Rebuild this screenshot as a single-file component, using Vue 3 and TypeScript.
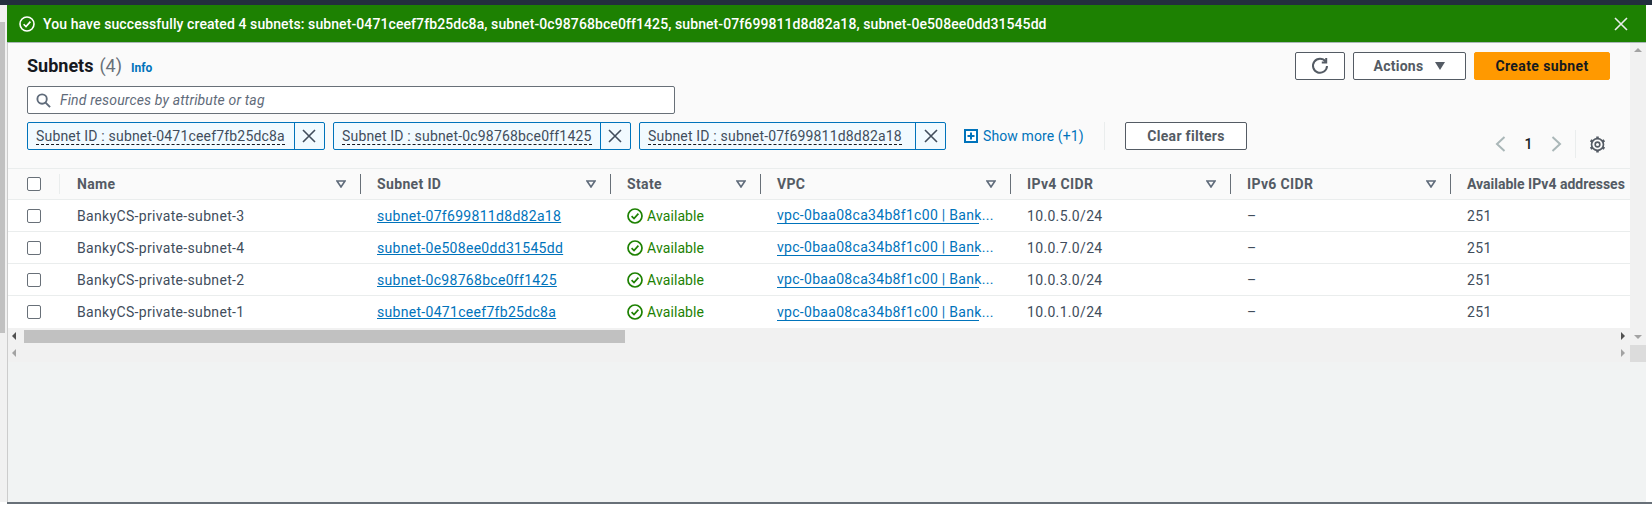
<script setup lang="ts">
interface Row { name: string; id: string; cidr: string }
const rows: Row[] = [
  { name: 'BankyCS-private-subnet-3', id: 'subnet-07f699811d8d82a18', cidr: '10.0.5.0/24' },
  { name: 'BankyCS-private-subnet-4', id: 'subnet-0e508ee0dd31545dd', cidr: '10.0.7.0/24' },
  { name: 'BankyCS-private-subnet-2', id: 'subnet-0c98768bce0ff1425', cidr: '10.0.3.0/24' },
  { name: 'BankyCS-private-subnet-1', id: 'subnet-0471ceef7fb25dc8a', cidr: '10.0.1.0/24' },
]
const tokens = ['subnet-0471ceef7fb25dc8a', 'subnet-0c98768bce0ff1425', 'subnet-07f699811d8d82a18']
const cols = ['Name', 'Subnet ID', 'State', 'VPC', 'IPv4 CIDR', 'IPv6 CIDR']
</script>

<template>
  <div class="page">
    <div class="topbar"></div>
    <div class="main">
      <div class="leftbar"><div class="leftthumb"></div></div>
      <div class="content">
        <div class="flash">
          <svg class="flash-ico" width="16" height="16" viewBox="0 0 16 16" fill="none" stroke="#fff" stroke-width="1.6"><circle cx="8" cy="8" r="7"/><path d="M4.6 8.2 7 10.6l4.4-5"/></svg>
          <span class="flash-text">You have successfully created 4 subnets: subnet-0471ceef7fb25dc8a, subnet-0c98768bce0ff1425, subnet-07f699811d8d82a18, subnet-0e508ee0dd31545dd</span>
          <svg class="flash-x" width="14" height="14" viewBox="0 0 14 14" fill="none" stroke="#eaeded" stroke-width="1.6"><path d="M1 1l12 12M13 1 1 13"/></svg>
        </div>
        <div class="work">
          <div class="body">
            <div class="head">
              <div class="filters">
                <div class="title"><b>Subnets</b><span class="count">(4)</span><a class="info">Info</a></div>
                <div class="search">
                  <svg width="15" height="15" viewBox="0 0 16 16" fill="none" stroke="#5f6b7a" stroke-width="2"><circle cx="6.5" cy="6.5" r="5"/><path d="M10.2 10.2 15 15"/></svg>
                  <span>Find resources by attribute or tag</span>
                </div>
                <div class="tokens">
                  <div v-for="t in tokens" :key="t" class="token">
                    <span class="token-text"><span>Subnet ID : {{ t }}</span></span>
                    <span class="token-x"><svg width="14" height="14" viewBox="0 0 14 14" fill="none" stroke="#414d5c" stroke-width="1.6"><path d="M1 1l12 12M13 1 1 13"/></svg></span>
                  </div>
                  <a class="more"><svg width="14" height="14" viewBox="0 0 14 14"><rect width="14" height="14" fill="#0073bb"/><rect x="2" y="2" width="10" height="10" fill="#fff"/><path d="M7 3.5v7M3.5 7h7" stroke="#0073bb" stroke-width="2"/></svg>Show more (+1)</a>
                  <span class="vdiv"></span>
                  <button class="btn clear">Clear filters</button>
                </div>
              </div>
              <div class="right">
                <div class="actions">
                  <button class="btn refresh"><svg width="18" height="18" viewBox="0 0 18 18" fill="none" stroke="#545b64" stroke-width="2"><path d="M14.6 4.6A7 7 0 1 0 16 9"/><path d="M15.2 1v4.4h-4.4"/></svg></button>
                  <button class="btn act">Actions<i class="caret"></i></button>
                  <button class="btn create">Create subnet</button>
                </div>
                <div class="pager">
                  <svg width="11" height="16" viewBox="0 0 11 16" fill="none" stroke="#aab7b8" stroke-width="2"><path d="M9.5 1 2 8l7.5 7"/></svg>
                  <span class="pnum">1</span>
                  <svg width="11" height="16" viewBox="0 0 11 16" fill="none" stroke="#aab7b8" stroke-width="2"><path d="m1.5 1 7.5 7-7.5 7"/></svg>
                  <span class="vdiv2"></span>
                  <svg width="17" height="17" viewBox="0 0 16 16" fill="none" stroke="#545b64"><circle cx="8" cy="8" r="2.2" stroke-width="1.5"/><circle cx="8" cy="8" r="5.6" stroke-width="1.6"/><path d="M8 .5v2.2M8 13.3v2.2M1.5 4.2l1.9 1.1M12.6 10.7l1.9 1.1M1.5 11.8l1.9-1.1M12.6 5.3l1.9-1.1" stroke-width="2.4"/></svg>
                </div>
              </div>
            </div>
            <div class="grid thead">
              <div class="cell chk"><i class="box"></i><span class="sep light"></span></div>
              <div v-for="c in cols" :key="c" class="cell th">
                <span class="th-label">{{ c }}</span>
                <svg class="filter" width="10" height="8" viewBox="0 0 10 8" fill="none" stroke="#5f6b7a" stroke-width="1.6"><path d="M1 1h8L5 7z"/></svg>
                <span class="sep"></span>
              </div>
              <div class="cell th last"><span class="th-label">Available IPv4 addresses</span></div>
            </div>
            <div v-for="r in rows" :key="r.id" class="grid row">
              <div class="cell chk"><i class="box"></i></div>
              <div class="cell td">{{ r.name }}</div>
              <div class="cell td"><a class="link">{{ r.id }}</a></div>
              <div class="cell td state">
                <svg width="16" height="16" viewBox="0 0 16 16" fill="none" stroke="#1d8102" stroke-width="1.7"><circle cx="8" cy="8" r="7"/><path d="M4.6 8.2 7 10.6l4.4-5"/></svg>
                <span>Available</span>
              </div>
              <div class="cell td"><a class="vpc">vpc-0baa08ca34b8f1c00 | Bank...</a></div>
              <div class="cell td">{{ r.cidr }}</div>
              <div class="cell td">–</div>
              <div class="cell td">251</div>
            </div>
            <div class="hbar">
              <span class="arr l"></span>
              <div class="hthumb"></div>
              <span class="arr r"></span>
            </div>
            <div class="hbar">
              <span class="arr l light"></span>
              <span class="arr r light"></span>
            </div>
          </div>
          <div class="vbar">
            <div class="vtrack">
              <span class="up"></span>
              <span class="down"></span>
            </div>
            <div class="corner"></div>
          </div>
        </div>
      </div>
    </div>
    <div class="footer"></div>
  </div>
</template>

<style>
html, body { margin: 0; background: #fff; }
</style>

<style scoped>
.page { width: 1652px; height: 509px; display: flex; flex-direction: column; overflow: hidden; font-family: "Roboto", "Liberation Sans", sans-serif; font-size: 14px; color: #414d5c; background: #fff; }
.topbar { height: 5px; background: #232f3e; flex: none; }
.main { flex: 1; display: flex; min-height: 0; }
.leftbar { width: 7px; flex: none; background: #f1f1f1; }
.leftthumb { margin-top: 17px; height: 311px; width: 5px; background: #c1c1c1; }
.content { width: 1639px; flex: none; background: #f1f3f3; }
.flash { height: 38px; box-sizing: border-box; background: #1d8102; display: flex; align-items: center; padding: 0 18px 0 12px; color: #fff; border-bottom: 1px solid #aab7b8; }
.flash-ico { flex: none; margin-right: 8px; }
.flash-text { flex: 1; font-size: 14px; font-weight: 500; letter-spacing: 0.09px; white-space: nowrap; }
.flash-x { flex: none; }
.work { display: flex; }
.body { width: 1623px; flex: none; border-left: 1px solid #ccc; box-sizing: border-box; overflow: hidden; min-height: 459px; }
.head { height: 126px; display: flex; padding-left: 19px; background: #fafafa; border-bottom: 1px solid #eaeded; box-sizing: border-box; }
.filters { width: 1222px; flex: none; }
.title { height: 31px; margin-top: 12px; box-sizing: border-box; display: flex; align-items: baseline; }
.title b { font-size: 18px; font-weight: 700; color: #16191f; }
.count { font-size: 18px; color: #687078; margin-left: 6px; }
.info { font-size: 12px; font-weight: 700; color: #0073bb; margin-left: 9px; }
.search { width: 648px; height: 28px; box-sizing: border-box; background: #fff; border: 1px solid #687078; border-radius: 2px; display: flex; align-items: center; padding-left: 8px; gap: 9px; font-style: italic; color: #5f6b7a; letter-spacing: 0.15px; }
.tokens { display: flex; align-items: center; margin-top: 8px; height: 28px; }
.token { width: 297.5px; margin-right: 8.5px; height: 28px; box-sizing: border-box; border: 1px solid #0073bb; background: #f1faff; border-radius: 2px; display: flex; flex: none; }
.token:nth-child(3) { width: 307px; margin-right: 18px; }
.token-text { flex: 1; padding-left: 8px; display: flex; align-items: center; white-space: nowrap; overflow: hidden; letter-spacing: 0.18px; }
.token-text span { border-bottom: 1px dashed #16191f; line-height: 16px; }
.token-x { width: 30px; flex: none; box-sizing: border-box; border-left: 1px solid #0073bb; display: flex; align-items: center; justify-content: center; }
.more { display: flex; align-items: center; gap: 5px; color: #0073bb; letter-spacing: 0.1px; white-space: nowrap; width: 120px; flex: none; }
.more svg { flex: none; }
.vdiv { width: 1px; height: 28px; background: #eaeded; margin: 0 20px; flex: none; }
.btn { font-family: inherit; font-size: 14px; font-weight: 700; letter-spacing: 0.25px; color: #545b64; background: #fff; border: 1px solid #545b64; border-radius: 2px; box-sizing: border-box; height: 28px; padding: 0; display: flex; align-items: center; justify-content: center; flex: none; }
.clear { width: 122px; letter-spacing: 0.3px; }
.right { flex: 1; display: flex; flex-direction: column; align-items: flex-end; padding-right: 20px; }
.actions { display: flex; gap: 8px; margin-top: 9px; }
.refresh { width: 50px; }
.act { width: 113px; gap: 12px; }
.caret { display: block; width: 0; height: 0; border-left: 5px solid transparent; border-right: 5px solid transparent; border-top: 8px solid #545b64; }
.create { width: 136px; background: #ff9900; border-color: #ff9900; color: #16191f; letter-spacing: 0.4px; }
.pager { display: flex; align-items: center; height: 28px; margin-top: 50px; margin-right: 4px; }
.pnum { width: 45px; text-align: center; font-weight: 500; color: #16191f; }
.vdiv2 { width: 1px; height: 28px; background: #eaeded; margin: 0 13px; }
.grid { display: grid; grid-template-columns: 53px 300px 250px 150px 250px 220px 220px 200px; align-items: center; white-space: nowrap; }
.thead { height: 31px; background: #fafafa; border-bottom: 1px solid #eaeded; box-sizing: border-box; }
.row { height: 32px; background: #fff; border-bottom: 1px solid #eaeded; box-sizing: border-box; }
.row:nth-of-type(6) { border-bottom: 0; }
.cell { box-sizing: border-box; padding-left: 16px; min-width: 0; }
.chk { padding-left: 19px; display: flex; align-items: center; justify-content: space-between; }
.box { display: block; width: 12px; height: 12px; border: 1px solid #687078; border-radius: 2px; background: #fff; flex: none; }
.sep { width: 1px; height: 20px; background: #687078; flex: none; margin-left: 14px; }
.sep.light { background: #eaeded; margin: 0; position: relative; left: -1px; }
.th { font-weight: 700; color: #545b64; display: flex; align-items: center; letter-spacing: 0.35px; }
.th.last { letter-spacing: 0; }
.th-label { flex: 1; }
.filter { flex: none; }
.td { letter-spacing: 0.33px; }
.link { color: #0073bb; text-decoration: underline; letter-spacing: 0.3px; }
.vpc { display: inline-block; width: 202px; white-space: nowrap; color: #0073bb; border-bottom: 1px solid #0073bb; line-height: 16px; letter-spacing: 0.3px; }
.state { color: #1d8102; display: flex; align-items: center; gap: 4px; letter-spacing: 0.1px; }
.hbar { height: 17px; background: #f1f1f1; position: relative; }
.hthumb { position: absolute; left: 16px; top: 2px; width: 601px; height: 13px; background: #c1c1c1; }
.arr { position: absolute; top: 4px; width: 0; height: 0; border-top: 4px solid transparent; border-bottom: 4px solid transparent; }
.arr.l { left: 4px; border-right: 4px solid #505050; }
.arr.r { right: 5px; border-left: 4px solid #505050; }
.arr.light.l { border-right-color: #a3a3a3; }
.arr.light.r { border-left-color: #a3a3a3; }
.vbar { width: 16px; flex: none; }
.vtrack { height: 302px; background: #f1f1f1; position: relative; }
.corner { height: 17px; background: #dcdcdc; }
.up, .down { position: absolute; left: 4px; width: 0; height: 0; border-left: 4px solid transparent; border-right: 4px solid transparent; }
.up { top: 5px; border-bottom: 4px solid #a3a3a3; }
.down { bottom: 6px; border-top: 4px solid #a3a3a3; }
.footer { height: 7px; flex: none; background: #fff; border-top: 2px solid #687078; box-sizing: border-box; margin-left: 7px; }
</style>
